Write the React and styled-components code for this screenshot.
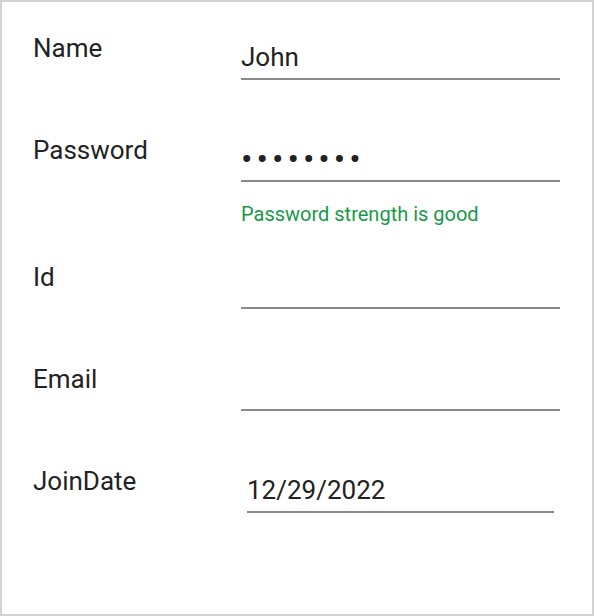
import React from 'react'
import styled, { createGlobalStyle } from 'styled-components'

const GlobalStyle = createGlobalStyle`
  html, body {
    margin: 0;
    padding: 0;
    background: #fff;
  }
  * {
    box-sizing: border-box;
  }
`

const Frame = styled.div`
  width: 594px;
  height: 616px;
  border: 2px solid #d2d2d2;
  padding: 34px 31px 0 31px;
  background: #fff;
  font-family: Roboto, "Liberation Sans", sans-serif;
  color: #212121;
`

const Form = styled.form`
  display: flex;
  flex-direction: column;
`

const Row = styled.div`
  display: grid;
  grid-template-columns: 208px 319px;
  align-items: start;
  height: ${p => (p.$tall ? 127 : 102)}px;
`

const Label = styled.label`
  font-size: 26px;
  line-height: 24px;
  color: #232323;
`

const FieldColumn = styled.div`
  display: flex;
  flex-direction: column;
`

const Input = styled.input`
  height: 44px;
  margin: ${p => (p.$inset ? '0 6px' : '0')};
  padding: 0;
  border: 0;
  border-bottom: 2px solid #8a8a8a;
  border-radius: 0;
  outline: none;
  background: transparent;
  font-family: Roboto, "Liberation Sans", sans-serif;
  font-size: ${p => (p.type === 'password' ? 34 : 26)}px;
  color: #212121;
  letter-spacing: ${p => (p.type === 'password' ? '4px' : 'normal')};
`

const Hint = styled.div`
  margin-top: 22px;
  font-size: 20px;
  line-height: 20px;
  color: #17994a;
`

const fields = [
  { id: 'name', label: 'Name', value: 'John' },
  { id: 'password', label: 'Password', value: 'password', type: 'password', hint: 'Password strength is good' },
  { id: 'userid', label: 'Id', value: '' },
  { id: 'email', label: 'Email', value: '' },
  { id: 'joindate', label: 'JoinDate', value: '12/29/2022', inset: true },
]

export default function App() {
  return (
    <>
      <GlobalStyle />
      <Frame>
        <Form onSubmit={e => e.preventDefault()}>
          {fields.map(f => (
            <Row key={f.id} $tall={!!f.hint}>
              <Label htmlFor={f.id}>{f.label}</Label>
              <FieldColumn>
                <Input
                  id={f.id}
                  type={f.type || 'text'}
                  value={f.value}
                  $inset={f.inset}
                  readOnly
                />
                {f.hint && <Hint>{f.hint}</Hint>}
              </FieldColumn>
            </Row>
          ))}
        </Form>
      </Frame>
    </>
  )
}
